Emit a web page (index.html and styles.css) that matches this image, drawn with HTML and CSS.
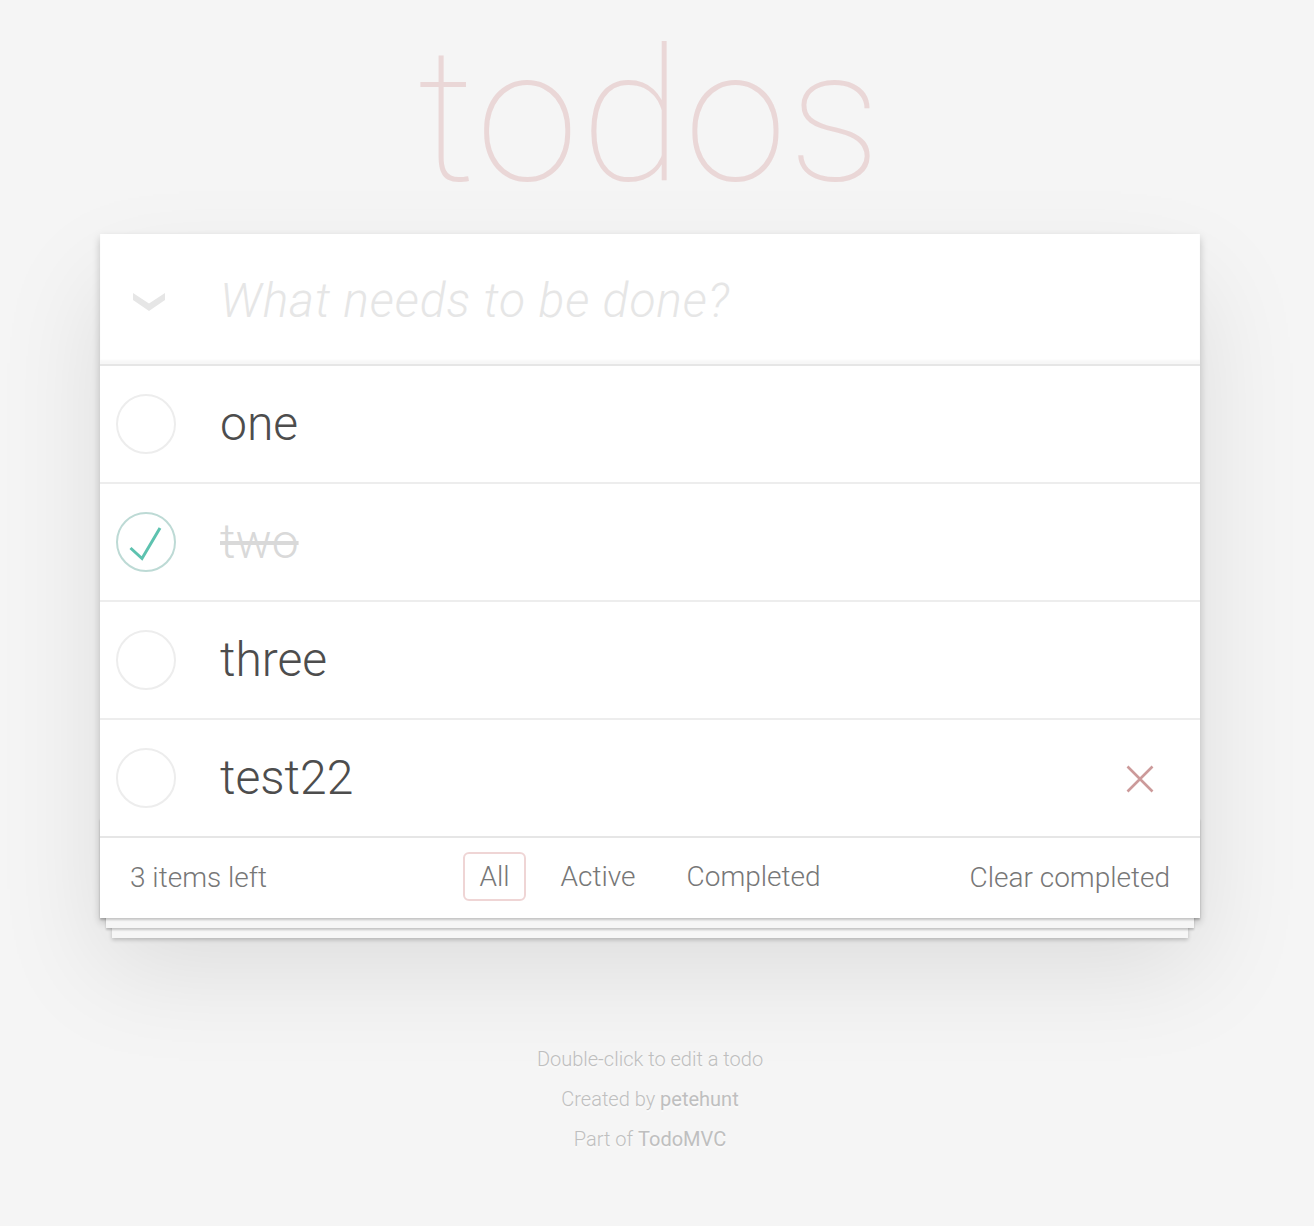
FILE: index.html
```html
<!DOCTYPE html>
<html lang="en">
<head>
<meta charset="utf-8">
<title>React • TodoMVC</title>
<link rel="stylesheet" href="styles.css">
</head>
<body>
<div class="app">
  <h1 class="title">todos</h1>
  <section class="todoapp">
    <header class="header">
      <span class="toggle-all">
        <svg width="32" height="20" viewBox="0 0 32 20"><polygon points="0,1 16,11.5 32,1 32,8 16,19 0,8" fill="#e6e6e6"/></svg>
      </span>
      <input class="new-todo" type="text" placeholder="What needs to be done?">
    </header>
    <ul class="todo-list">
      <li class="todo">
        <span class="toggle"><svg width="60" height="60" viewBox="0 0 60 60"><circle cx="30" cy="30" r="29" fill="none" stroke="#ededed" stroke-width="2"/></svg></span>
        <label class="todo-label">one</label>
      </li>
      <li class="todo completed">
        <span class="toggle"><svg width="60" height="60" viewBox="0 0 60 60"><circle cx="30" cy="30" r="29" fill="none" stroke="#bddad5" stroke-width="2"/><polyline points="14.5,36 26,46.5 44,16" fill="none" stroke="#5dc2af" stroke-width="3"/></svg></span>
        <label class="todo-label">two</label>
      </li>
      <li class="todo">
        <span class="toggle"><svg width="60" height="60" viewBox="0 0 60 60"><circle cx="30" cy="30" r="29" fill="none" stroke="#ededed" stroke-width="2"/></svg></span>
        <label class="todo-label">three</label>
      </li>
      <li class="todo">
        <span class="toggle"><svg width="60" height="60" viewBox="0 0 60 60"><circle cx="30" cy="30" r="29" fill="none" stroke="#ededed" stroke-width="2"/></svg></span>
        <label class="todo-label">test22</label>
        <button class="destroy" aria-label="Delete"><svg width="28" height="28" viewBox="0 0 28 28"><path d="M1.5 1.5L26.5 26.5M26.5 1.5L1.5 26.5" stroke="#cc9a9a" stroke-width="2.6" fill="none"/></svg></button>
      </li>
    </ul>
    <footer class="footer">
      <span class="count">3 items left</span>
      <ul class="filters">
        <li><a class="filter selected" href="#/">All</a></li>
        <li><a class="filter" href="#/active">Active</a></li>
        <li><a class="filter" href="#/completed">Completed</a></li>
      </ul>
      <button class="clear">Clear completed</button>
    </footer>
  </section>
  <footer class="info">
    <p>Double-click to edit a todo</p>
    <p>Created by <a href="#">petehunt</a></p>
    <p>Part of <a href="#">TodoMVC</a></p>
  </footer>
</div>
</body>
</html>
```
FILE: styles.css
```css
html, body {
  margin: 0;
  padding: 0;
}

body {
  width: 1300px;
  background: #f5f5f5;
  color: #4d4d4d;
  font-family: Roboto, "Helvetica Neue", Helvetica, Arial, sans-serif;
  font-weight: 300;
  font-size: 28px;
  line-height: 39.2px;
  -webkit-font-smoothing: antialiased;
}

.app {
  max-width: 1100px;
  margin: 0 auto;
}

.title {
  margin: 6px 0 8px;
  height: 220px;
  font-size: 186px;
  line-height: 220px;
  letter-spacing: 2px;
  font-weight: 100;
  text-align: center;
  color: rgba(175, 47, 47, 0.15);
}

.todoapp {
  position: relative;
  background: #fff;
  box-shadow: 0 4px 8px 0 rgba(0, 0, 0, 0.2), 0 50px 100px 0 rgba(0, 0, 0, 0.1);
}

.header {
  display: flex;
  align-items: center;
  height: 130px;
  box-shadow: inset 0 -4px 2px rgba(0, 0, 0, 0.03);
}

.toggle-all {
  display: flex;
  width: 87px;
  padding-left: 33px;
  margin-top: 6px;
}

.new-todo {
  flex: 1;
  height: 130px;
  box-sizing: border-box;
  padding: 2px 32px 0 0;
  border: 0;
  outline: none;
  background: transparent;
  font-family: inherit;
  font-weight: 300;
  font-size: 48px;
  color: #4d4d4d;
}

.new-todo::placeholder {
  font-style: italic;
  font-weight: 300;
  letter-spacing: 0.9px;
  color: #e6e6e6;
}

.todo-list {
  list-style: none;
  margin: 0;
  padding: 0;
  border-top: 2px solid #e6e6e6;
}

.todo {
  display: flex;
  align-items: center;
  border-bottom: 2px solid #ededed;
}

.todo:last-child {
  border-bottom: none;
}

.toggle {
  display: flex;
  margin-left: 16px;
}

.todo-label {
  flex: 1;
  margin-left: 44px;
  padding: 29px 0;
  font-size: 48px;
  line-height: 58px;
  color: #4d4d4d;
}

.completed .todo-label {
  color: #d9d9d9;
  text-decoration: line-through;
}

.destroy {
  display: flex;
  margin: 2px 46px 0 0;
  padding: 0;
  border: 0;
  background: none;
}

.footer {
  position: relative;
  display: grid;
  grid-template-columns: 1fr auto 1fr;
  grid-template-rows: 40px;
  align-items: center;
  height: 40px;
  padding: 20px 30px 20px;
  border-top: 2px solid #e6e6e6;
  color: #777;
}

.footer::before {
  content: "";
  position: absolute;
  right: 0;
  bottom: 0;
  left: 0;
  height: 100px;
  overflow: hidden;
  pointer-events: none;
  box-shadow: 0 2px 2px rgba(0, 0, 0, 0.2),
    0 16px 0 -6px #f6f6f6,
    0 18px 2px -6px rgba(0, 0, 0, 0.2),
    0 32px 0 -12px #f6f6f6,
    0 34px 4px -12px rgba(0, 0, 0, 0.2);
}

.count {
  justify-self: start;
  position: relative;
}

.filters {
  position: relative;
  display: flex;
  gap: 7px;
  list-style: none;
  margin: 0 0 4px;
  padding: 0;
}

.filter {
  display: inline-block;
  margin: 0 6px;
  padding: 6px 14px;
  line-height: 33px;
  border: 2px solid transparent;
  border-radius: 6px;
  color: inherit;
  text-decoration: none;
}

.filter.selected {
  border-color: rgba(175, 47, 47, 0.2);
}

.clear {
  position: relative;
  justify-self: end;
  padding: 0;
  border: 0;
  background: none;
  font: inherit;
  line-height: 39.2px;
  color: inherit;
  cursor: pointer;
}

.info {
  margin-top: 131px;
  font-size: 20px;
  line-height: 20px;
  color: #bfbfbf;
  text-align: center;
  text-shadow: 0 2px 0 rgba(255, 255, 255, 0.5);
}

.info p {
  margin: 0 0 20px;
}

.info a {
  color: inherit;
  font-weight: 400;
  text-decoration: none;
}
```
